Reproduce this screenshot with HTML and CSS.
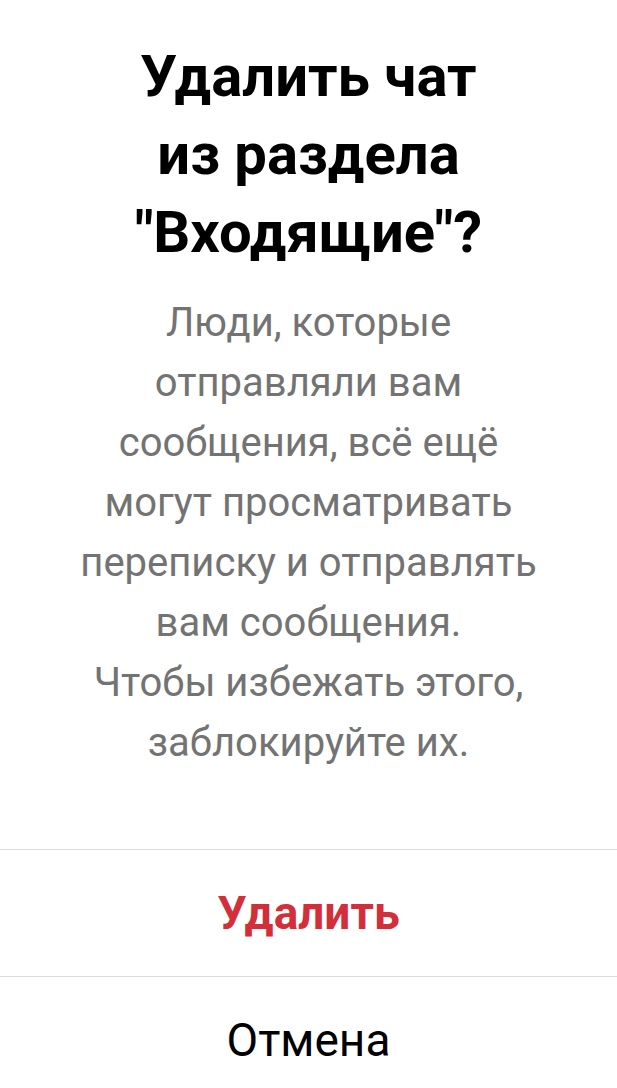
FILE: index.html
```
<!DOCTYPE html>
<html lang="ru">
<head>
  <meta charset="UTF-8">
  <meta name="viewport" content="width=device-width, initial-scale=1.0">
  <title>Удалить чат</title>
  <link rel="stylesheet" href="styles.css">
</head>
<body>
  <div class="dialog" role="dialog" aria-labelledby="title" aria-describedby="text">
    <div class="dialog-body">
      <h1 id="title">Удалить чат из раздела "Входящие"?</h1>
      <p id="text">Люди, которые отправляли вам сообщения, всё ещё могут просматривать переписку и отправлять вам сообщения.<br>Чтобы избежать этого, заблокируйте их.</p>
    </div>
    <button type="button" class="delete-btn">Удалить</button>
    <button type="button" class="cancel-btn">Отмена</button>
  </div>
</body>
</html>
```

FILE: styles.css
```
body, html {
  margin: 0;
  padding: 0;
  background-color: #fff;
  font-family: Roboto, sans-serif;
}

.dialog {
  display: flex;
  flex-direction: column;
  text-align: center;
}

.dialog-body {
  padding: 37px 72px 76px;
}

h1 {
  margin: 0 48px;
  color: #000;
  font-size: 58px;
  line-height: 78px;
  font-weight: 700;
}

p {
  margin: 22px 0 0;
  color: #737373;
  font-size: 40px;
  line-height: 60px;
}

.dialog button {
  padding: 32px 16px;
  border: none;
  border-top: 1px solid #dbdbdb;
  background: none;
  color: #000;
  font-family: inherit;
  font-size: 46px;
  line-height: 62px;
  cursor: pointer;
}

.dialog .delete-btn {
  color: #d32f3a;
  font-weight: 700;
}

.dialog .cancel-btn {
  padding-bottom: 16px;
}
```
